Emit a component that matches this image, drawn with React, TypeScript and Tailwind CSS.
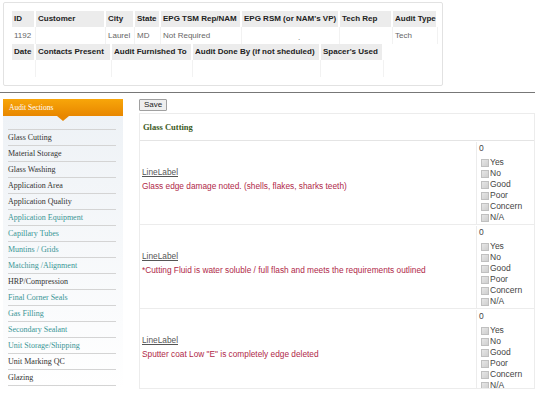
import React from "react";

const sans = { fontFamily: '"Liberation Sans", Arial, sans-serif' };
const serif = { fontFamily: '"Liberation Serif", "Times New Roman", serif' };

const row1 = [
  { h: "ID", w: 24, v: "1192" },
  { h: "Customer", w: 70, v: "" },
  { h: "City", w: 29, v: "Laurel" },
  { h: "State", w: 26, v: "MD" },
  { h: "EPG TSM Rep/NAM", w: 81, v: "Not Required" },
  { h: "EPG RSM (or NAM's VP)", w: 98, v: "." },
  { h: "Tech Rep", w: 53, v: "" },
  { h: "Audit Type", w: 45, v: "Tech" },
];
const row2 = [
  { h: "Date", w: 24 },
  { h: "Contacts Present", w: 76 },
  { h: "Audit Furnished To", w: 81 },
  { h: "Audit Done By (if not sheduled)", w: 128 },
  { h: "Spacer's Used", w: 63 },
];

const sections: [string, boolean][] = [
  ["Glass Cutting", false],
  ["Material Storage", false],
  ["Glass Washing", false],
  ["Application Area", false],
  ["Application Quality", false],
  ["Application Equipment", true],
  ["Capillary Tubes", true],
  ["Muntins / Grids", true],
  ["Matching /Alignment", true],
  ["HRP/Compression", false],
  ["Final Corner Seals", true],
  ["Gas Filling", true],
  ["Secondary Sealant", true],
  ["Unit Storage/Shipping", true],
  ["Unit Marking QC", false],
  ["Glazing", false],
];

const items = [
  "Glass edge damage noted. (shells, flakes, sharks teeth)",
  "*Cutting Fluid is water soluble / full flash and meets the requirements outlined",
  'Sputter coat Low "E" is completely edge deleted',
];

const opts = ["Yes", "No", "Good", "Poor", "Concern", "N/A"];

export default function App() {
  return (
    <div className="w-[540px] h-[399px] bg-white overflow-hidden text-[8px] text-[#333]" style={sans}>
      {/* top box */}
      <div className="ml-[3px] mt-[2px] w-[440px] h-[84px] border border-[#e2e2e2] rounded-[2px] pl-[8px] pt-[8px]">
        <div className="flex">
          {row1.map((c) => (
            <div key={c.h} style={{ width: c.w }} className="h-[16px] bg-[#ececec] border-r-2 border-white pl-[2px] font-bold leading-[16px] whitespace-nowrap text-[#222]">
              {c.h}
            </div>
          ))}
        </div>
        <div className="flex">
          {row1.map((c) => (
            <div key={c.h} style={{ width: c.w }} className={`h-[17px] border-r border-[#f2f2f2] leading-[17px] whitespace-nowrap text-[#666] ${c.v === "." ? "pl-[56px] pt-[2px]" : "pl-[2px]"}`}>
              {c.v}
            </div>
          ))}
        </div>
        <div className="flex">
          {row2.map((c) => (
            <div key={c.h} style={{ width: c.w }} className="h-[16px] bg-[#ececec] border-r-2 border-white pl-[2px] font-bold leading-[16px] whitespace-nowrap text-[#222]">
              {c.h}
            </div>
          ))}
        </div>
        <div className="flex">
          {row2.map((c) => (
            <div key={c.h} style={{ width: c.w }} className="h-[17px] border-r border-[#f2f2f2]" />
          ))}
        </div>
      </div>

      <div className="mt-[6px] w-[535px] h-px bg-[#777]" />

      <div className="flex mt-[6px]">
        {/* sidebar */}
        <div className="ml-[3px] w-[120px] shrink-0" style={serif}>
          <div className="relative h-[17px] bg-gradient-to-b from-[#f8a60a] to-[#e88700] text-white pl-[6px] leading-[17px] text-[7.5px]">
            Audit Sections
            <div className="absolute left-[54px] top-[17px] w-0 h-0 border-l-[6px] border-r-[6px] border-t-[5px] border-l-transparent border-r-transparent border-t-[#e88700]" />
          </div>
          <div className="bg-gradient-to-b from-[#eef2f6] to-white pt-[13px] pb-[8px] h-[274px]">
            <div className="ml-[5px] w-[108px] border-t border-[#d4d4d4]" />
            {sections.map(([s, teal]) => (
              <div key={s} className={`ml-[5px] w-[108px] h-[16px] leading-[15px] border-b border-[#d4d4d4] whitespace-nowrap text-[8px] ${teal ? "text-[#3a9696]" : "text-[#333]"}`}>
                {s}
              </div>
            ))}
          </div>
        </div>

        {/* main */}
        <div className="ml-[16px] w-[396px]">
          <div className="h-[12px] w-[28px] bg-[#eeeeee] border border-[#a0a0a0] rounded-[1px] text-[8px] leading-[10px] text-center text-[#222]">
            Save
          </div>
          <div className="mt-[2px] border border-[#ececec] h-[276px] overflow-hidden">
            <div className="h-[27px] border-b border-[#e4e4e4] pl-[3px] leading-[26px] font-bold text-[8.5px] text-[#3b5a1e]" style={serif}>
              Glass Cutting
            </div>
            {items.map((t, i) => (
              <div key={i} className={`flex h-[83px] ${i < 2 ? "border-b border-[#ececec]" : ""} mt-[1px]`}>
                <div className="w-[337px] border-r border-[#ececec] pl-[2px] pt-[24px]">
                  <div className="leading-[12px] underline text-[#555] text-[8.3px]">LineLabel</div>
                  <div className="mt-[2px] leading-[12px] text-[#b02848] whitespace-nowrap text-[8.3px]">{t}</div>
                </div>
                <div className="pl-[2px] pt-[1px] text-[#444] text-[8.5px]">
                  <div className="leading-[11px]">0</div>
                  <div className="mt-[3px]">
                    {opts.map((o) => (
                      <div key={o} className="flex items-center h-[11px] pl-[2px]">
                        <span className="w-[8px] h-[8px] border border-[#c0c0c0] bg-gradient-to-br from-[#e6e6e6] to-[#cfcfcf] mr-[1px]" />
                        <span className="leading-[11px]">{o}</span>
                      </div>
                    ))}
                  </div>
                </div>
              </div>
            ))}
          </div>
        </div>
      </div>
    </div>
  );
}
